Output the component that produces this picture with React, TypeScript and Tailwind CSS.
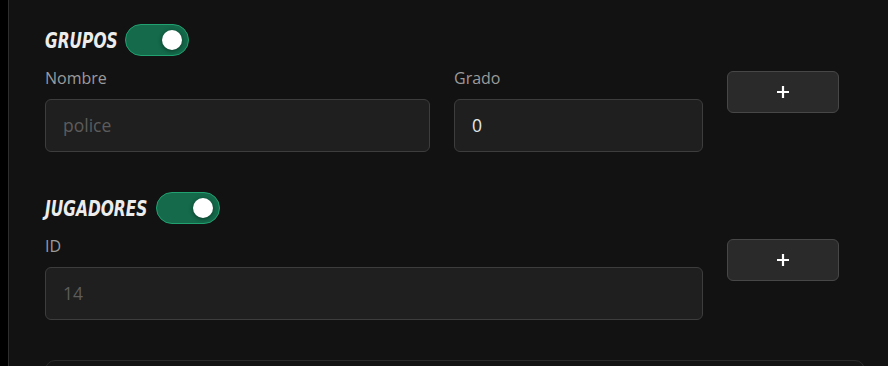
import React from "react";

const headFont = {
  fontFamily: '"DejaVu Sans Condensed", "DejaVu Sans", sans-serif',
};

function Toggle() {
  return (
    <div className="relative h-8 w-16 rounded-full border border-[#21a070] bg-[#146a4b]">
      <div className="absolute right-[6px] top-[5px] h-5 w-5 rounded-full bg-white shadow-[0_1px_4px_rgba(0,0,0,0.5)]" />
    </div>
  );
}

function PlusButton() {
  return (
    <button className="mt-1 flex h-[42px] w-[112px] items-center justify-center rounded-md border border-[#474747] bg-[#2a2a2a]">
      <svg width="14" height="14" viewBox="0 0 14 14">
        <path d="M7 1v12M1 7h12" stroke="#ffffff" strokeWidth="2.2" />
      </svg>
    </button>
  );
}

function Field({ label, value, placeholder, width }: { label: string; value?: string; placeholder?: string; width: string }) {
  return (
    <div className={`flex flex-col ${width}`}>
      <div className="h-[22px] text-[16px] leading-[22px] text-[#9b9b9b]">{label}</div>
      <div className="mt-[10px] flex h-[53px] items-center rounded-md border border-[#3d3d3d] bg-[#1f1f1f] px-[17px] text-[17.5px]">
        {value ? <span className="text-[#e8e8e8]">{value}</span> : <span className="text-[#5c5c5c]">{placeholder}</span>}
      </div>
    </div>
  );
}

function Heading({ text, width }: { text: string; width: string }) {
  return (
    <div className="flex h-8 items-center gap-2">
      <span className={`block overflow-visible whitespace-nowrap ${width}`}>
        <span
          style={headFont}
          className="inline-block origin-left scale-x-[0.78] text-[22px] font-extrabold italic uppercase text-[#ececec]"
        >
          {text}
        </span>
      </span>
      <Toggle />
    </div>
  );
}

export default function App() {
  return (
    <div className="flex h-[366px] w-[888px] overflow-hidden bg-black" style={{ fontFamily: '"Open Sans", "Noto Sans", sans-serif' }}>
      <div className="w-2 bg-black" />
      <div className="flex-1 border-l border-[#2e2e2e] bg-[#121212] pl-9 pt-6">
        <Heading text="Grupos" width="w-[72px]" />
        <div className="mt-[11px] flex items-start gap-6">
          <Field label="Nombre" placeholder="police" width="w-[385px]" />
          <Field label="Grado" value="0" width="w-[249px]" />
          <PlusButton />
        </div>

        <div className="mt-10">
          <Heading text="Jugadores" width="w-[103px]" />
          <div className="mt-[11px] flex items-start gap-6">
            <Field label="ID" placeholder="14" width="w-[658px]" />
            <PlusButton />
          </div>
        </div>

        <div className="mt-10 h-10 w-[820px] rounded-t-[10px] border border-[#2a2a2a] bg-[#141414]" />
      </div>
    </div>
  );
}
